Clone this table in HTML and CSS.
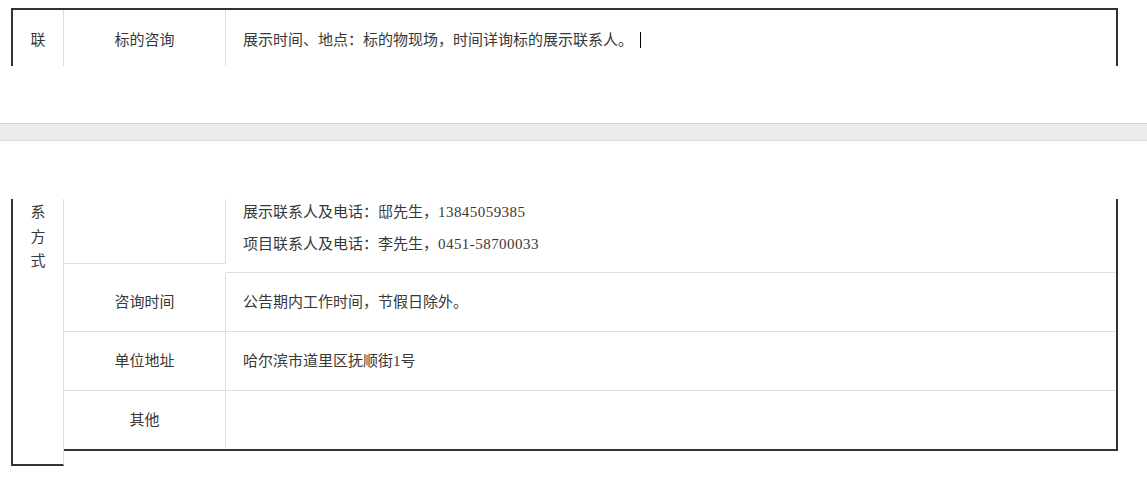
FILE: index.html
```html
<!DOCTYPE html>
<html lang="zh-CN">
<head>
<meta charset="utf-8">
<title>联系方式</title>
<link rel="stylesheet" href="styles.css">
</head>
<body>
<div class="page page-top">
  <div class="tbl-top">
    <div class="cell col1 center">联</div>
    <div class="cell col2 center">标的咨询</div>
    <div class="cell col3">展示时间、地点：标的物现场，时间详询标的展示联系人。<span class="caret"></span></div>
  </div>
</div>
<div class="page-gap"></div>
<div class="page page-bottom">
  <div class="tbl-bottom">
    <div class="side">系<br>方<br>式</div>
    <div class="main">
      <div class="row row-first">
        <div class="cell col2 first-empty"></div>
        <div class="cell col3 multi">
          <p>展示联系人及电话：邸先生，<span class="num">13845059385</span></p>
          <p>项目联系人及电话：李先生，<span class="num">0451-58700033</span></p>
        </div>
      </div>
      <div class="row">
        <div class="cell col2 center">咨询时间</div>
        <div class="cell col3">公告期内工作时间，节假日除外。</div>
      </div>
      <div class="row">
        <div class="cell col2 center">单位地址</div>
        <div class="cell col3">哈尔滨市道里区抚顺街1号</div>
      </div>
      <div class="row row-last">
        <div class="cell col2 center">其他</div>
        <div class="cell col3"></div>
      </div>
    </div>
  </div>
</div>
</body>
</html>
```
FILE: styles.css
```css
* { box-sizing: border-box; }
html, body { margin: 0; padding: 0; background: #fff; }
body {
  font-family: "Liberation Serif", "Noto Sans CJK SC", serif;
  font-size: 15px;
  color: #383838;
  width: 1147px;
  overflow: hidden;
}
.page { background: #fff; }
.page-top { height: 123px; padding-top: 8px; }
.page-gap {
  height: 18px;
  background: #ececec;
  border-top: 1px solid #d2d2d2;
  border-bottom: 1px solid #dedede;
}
.page-bottom { height: 354px; padding-top: 58px; }

.tbl-top {
  margin-left: 11px;
  width: 1107px;
  height: 58px;
  border-top: 2px solid #333;
  border-left: 2px solid #333;
  border-right: 2px solid #333;
  display: grid;
  grid-template-columns: 51px 162px 1fr;
}
.tbl-top .cell { padding-top: 20px; line-height: 20px; }
.tbl-top .col3 { padding-left: 17px; }
.cell.col1, .cell.col2 { border-right: 1px solid #dedede; }
.center { text-align: center; }
.caret {
  display: inline-block;
  width: 1px;
  height: 16px;
  background: #000;
  margin-left: 7px;
  vertical-align: -3px;
}
.num { letter-spacing: 0.45px; }

.tbl-bottom {
  margin-left: 11px;
  display: flex;
  align-items: flex-start;
}
.side {
  width: 53px;
  height: 267px;
  border-left: 2px solid #333;
  border-bottom: 2px solid #333;
  border-right: 1px solid #dedede;
  text-align: center;
  line-height: 24.5px;
  padding-top: 1px;
}
.main {
  width: 1054px;
  border-right: 2px solid #333;
  border-bottom: 2px solid #333;
}
.row {
  display: grid;
  grid-template-columns: 162px 1fr;
  height: 59px;
  border-bottom: 1px solid #dedede;
}
.row .cell {
  display: flex;
  align-items: center;
  line-height: 20px;
}
.row .cell.center { justify-content: center; }
.row .col3 { padding-left: 17px; }
.row-last { height: 58px; border-bottom: none; }

.row-first {
  height: 74px;
  border-bottom: none;
  align-items: start;
}
.row-first .first-empty {
  height: 65px;
  border-bottom: 1px solid #dedede;
}
.row-first .multi {
  height: 74px;
  border-bottom: 1px solid #dedede;
  display: flex;
  flex-direction: column;
  align-items: flex-start;
  gap: 7px;
  padding-top: 1px;
}
.multi p { margin: 0; line-height: 24.5px; }
```
